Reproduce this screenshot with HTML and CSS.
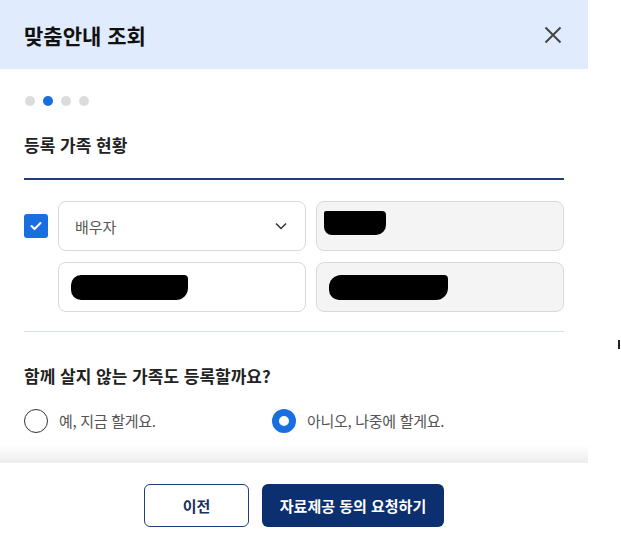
FILE: index.html
```html
<!DOCTYPE html>
<html lang="ko">
<head>
<meta charset="utf-8">
<title>맞춤안내 조회</title>
<link rel="stylesheet" href="styles.css">
</head>
<body>
<div class="modal">
  <header class="modal-header">
    <h1 class="modal-title">맞춤안내 조회</h1>
    <button class="close-btn" aria-label="닫기">
      <svg width="18" height="18" viewBox="0 0 18 18"><path d="M1.5 1.5 L16.5 16.5 M16.5 1.5 L1.5 16.5" stroke="#444" stroke-width="2" fill="none"/></svg>
    </button>
  </header>
  <div class="modal-body">
    <div class="dots">
      <span class="dot"></span><span class="dot active"></span><span class="dot"></span><span class="dot"></span>
    </div>
    <h2 class="section-title">등록 가족 현황</h2>
    <div class="divider-strong"></div>
    <div class="family-grid">
      <span class="checkbox">
        <svg width="12" height="10" viewBox="0 0 12 10"><path d="M1.5 5 L4.5 8 L10.5 2" stroke="#fff" stroke-width="2" fill="none" stroke-linecap="round" stroke-linejoin="round"/></svg>
      </span>
      <div class="field select">
        <span class="select-text">배우자</span>
        <svg width="12" height="8" viewBox="0 0 12 8"><path d="M1 1.5 L6 6.5 L11 1.5" stroke="#333" stroke-width="1.5" fill="none"/></svg>
      </div>
      <div class="field readonly"><span class="redact r1"></span></div>
      <span class="spacer"></span>
      <div class="field"><span class="redact r2"></span></div>
      <div class="field readonly"><span class="redact r3"></span></div>
    </div>
    <div class="divider-light"></div>
    <h2 class="question">함께 살지 않는 가족도 등록할까요?</h2>
    <div class="radio-group">
      <label class="radio-option first"><span class="radio"></span><span class="radio-label">예, 지금 할게요.</span></label>
      <label class="radio-option"><span class="radio checked"></span><span class="radio-label">아니오, 나중에 할게요.</span></label>
    </div>
  </div>
  <footer class="modal-footer">
    <button class="btn btn-outline">이전</button>
    <button class="btn btn-primary">자료제공 동의 요청하기</button>
  </footer>
</div>
<span class="cursor-mark"></span>
</body>
</html>
```
FILE: styles.css
```css
* { box-sizing: border-box; }
html, body { margin: 0; padding: 0; background: #fff; }
body {
  font-family: "Noto Sans CJK KR", "Noto Sans", sans-serif;
  width: 621px;
  height: 543px;
  overflow: hidden;
  position: relative;
}
.modal {
  width: 588px;
  height: 543px;
  display: flex;
  flex-direction: column;
  background: #fff;
}
.modal-header {
  height: 69px;
  flex: none;
  background: #e0ebfd;
  display: flex;
  align-items: center;
  justify-content: space-between;
  padding: 0 26px 0 24px;
}
.modal-title {
  margin: 0;
  font-size: 21px;
  font-weight: 700;
  color: #111;
  line-height: 28px;
}
.close-btn {
  border: 0;
  background: transparent;
  padding: 0;
  width: 18px;
  height: 18px;
  display: flex;
}
.modal-body {
  flex: 1;
  position: relative;
  padding: 27px 24px 0;
}
.modal-body::after {
  content: "";
  position: absolute;
  left: 0; right: 0; bottom: 0;
  height: 18px;
  background: linear-gradient(to bottom, rgba(0,0,0,0), rgba(0,0,0,0.075));
}
.dots { display: flex; gap: 8px; height: 10px; padding-left: 1px; }
.dot { width: 10px; height: 10px; border-radius: 50%; background: #dcdcdc; }
.dot.active { background: #1a6fe0; }
.section-title {
  margin: 27px 0 0;
  font-size: 17px;
  font-weight: 700;
  line-height: 24px;
  color: #222;
}
.divider-strong { margin-top: 21px; height: 2px; background: #1f3f7c; }
.family-grid {
  margin-top: 21px;
  display: grid;
  grid-template-columns: 24px 1fr 1fr;
  column-gap: 10px;
  row-gap: 11px;
  align-items: center;
}
.checkbox {
  width: 24px;
  height: 24px;
  border-radius: 3px;
  background: #1a6fe0;
  display: flex;
  align-items: center;
  justify-content: center;
}
.field {
  height: 50px;
  border: 1px solid #d9d9d9;
  border-radius: 8px;
  background: #fff;
  display: flex;
  align-items: center;
  padding: 0 18px 0 12px;
}
.field.readonly { background: #f4f4f4; padding-left: 7px; }
.select { justify-content: space-between; padding-left: 16px; }
.select-text { font-size: 15px; color: #555; }
.redact { display: block; background: #000; }
.r1 { width: 62px; height: 24px; border-radius: 2px 4px 10px 8px; margin-top: -6px; }
.r2 { width: 117px; height: 25px; border-radius: 10px 4px 12px 10px; }
.r3 { width: 119px; height: 25px; border-radius: 12px 4px 12px 10px; margin-left: 5px; }
.divider-light { margin-top: 19px; height: 1px; background: #d5dfea; }
.question {
  margin: 32px 0 0;
  font-size: 17px;
  font-weight: 700;
  line-height: 24px;
  color: #222;
}
.radio-group { margin-top: 21px; display: flex; }
.radio-option { display: flex; align-items: center; gap: 11px; }
.radio-option.first { width: 248px; }
.radio {
  width: 24px;
  height: 24px;
  border-radius: 50%;
  border: 1.5px solid #333;
  background: #fff;
}
.radio.checked { border: 7px solid #1a6fe0; }
.radio-label { font-size: 15px; color: #555; line-height: 24px; letter-spacing: -0.3px; }
.modal-footer {
  flex: none;
  height: 80px;
  display: flex;
  justify-content: center;
  align-items: flex-start;
  gap: 13px;
  padding-top: 21px;
}
.btn {
  height: 43px;
  border-radius: 6px;
  font-family: inherit;
  font-size: 15px;
  font-weight: 700;
  padding: 0;
}
.btn-outline {
  width: 105px;
  background: #fff;
  border: 1.5px solid #1f3f7c;
  color: #1a2f5a;
}
.btn-primary {
  width: 182px;
  background: #0c2f6f;
  border: 0;
  color: #fff;
}
.cursor-mark {
  position: absolute;
  left: 618px;
  top: 340px;
  width: 2px;
  height: 9px;
  background: #222;
}
```
